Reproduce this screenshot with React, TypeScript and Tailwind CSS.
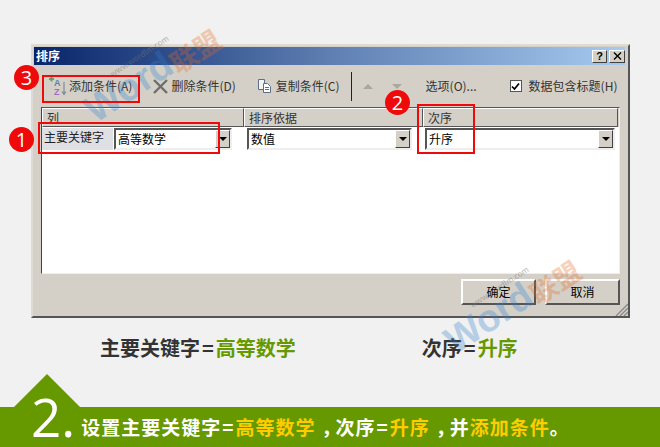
import React from "react";

const cjk = { fontFamily: '"Noto Sans CJK SC", "Liberation Sans", sans-serif' };

function Arrow() {
  return (
    <div className="flex h-[18px] w-[15px] shrink-0 items-center justify-center border border-t-white border-l-white border-r-[#404040] border-b-[#404040] bg-[#d4d0c8]">
      <div className="h-0 w-0 border-x-[4px] border-t-[4px] border-x-transparent border-t-black" />
    </div>
  );
}

function Combo({ text, className }: { text: string; className: string }) {
  return (
    <div className={"flex h-[22px] items-center justify-between border-2 border-t-[#555] border-l-[#555] border-r-[#eee] border-b-[#eee] bg-white pl-[2px] " + className}>
      <span className="text-[12px] leading-none text-black">{text}</span>
      <Arrow />
    </div>
  );
}

function Head({ text, className }: { text: string; className: string }) {
  return (
    <div className={"flex h-[19px] items-center border border-t-white border-l-white border-r-[#555] border-b-[#555] bg-[#d4d0c8] pl-[4px] text-[12px] text-[#333] " + className}>
      {text}
    </div>
  );
}

function Badge({ n, className }: { n: string; className: string }) {
  return (
    <div
      className={"absolute flex h-[25px] w-[25px] items-center justify-center rounded-full bg-[#ee0a0a] text-[20px] leading-none text-white " + className}
      style={{ fontFamily: '"Open Sans", sans-serif' }}
    >
      {n}
    </div>
  );
}

function Watermark({ className }: { className: string }) {
  return (
    <div className={"pointer-events-none absolute flex rotate-[-33deg] items-end " + className}>
      <span className="text-[38px] font-bold leading-none text-[#2f7fd0] opacity-30" style={{ fontFamily: '"Liberation Sans", sans-serif' }}>
        Word
      </span>
      <span className="text-[27px] font-bold leading-none text-[#e86a20] opacity-30">联盟</span>
      <span className="absolute left-[40px] top-[-5px] text-[8px] leading-none text-[#777] opacity-50">www.wordlm.com</span>
    </div>
  );
}

function AddIcon() {
  return (
    <svg width="20" height="22" viewBox="0 0 20 22" className="shrink-0">
      <path d="M1 4h5M3.5 1.5v5" stroke="#5aa56a" strokeWidth="2" />
      <text x="6" y="11" fontSize="9" fontWeight="700" fill="#5b7fb5" fontFamily="Liberation Sans">A</text>
      <text x="6" y="20" fontSize="9" fontWeight="700" fill="#a06fc0" fontFamily="Liberation Sans">Z</text>
      <path d="M16 7v12M14 16.5l2 3 2-3" stroke="#7f8b9a" strokeWidth="1.2" fill="none" />
    </svg>
  );
}

function DeleteIcon() {
  return (
    <svg width="17" height="15" viewBox="0 0 17 15" className="shrink-0">
      <path d="M2 1l13 13M15 1L2 14" stroke="#6e6e6e" strokeWidth="2.4" />
    </svg>
  );
}

function CopyIcon() {
  return (
    <svg width="16" height="16" viewBox="0 0 16 16" className="shrink-0">
      <path d="M1.5 1.5h6v10h-6z" fill="#f4f4f4" stroke="#5e6f85" />
      <path d="M6.5 5.5h4l3 3v6h-7z" fill="#fff" stroke="#5e6f85" />
      <path d="M8 9.5h4M8 11.5h4" stroke="#5e6f85" />
    </svg>
  );
}

export default function App() {
  return (
    <div className="relative flex h-[447px] w-[660px] flex-col overflow-hidden bg-[#f1f1f1]" style={cjk}>
      {/* dialog */}
      <div className="relative ml-[31px] mt-[44px] flex h-[274px] w-[599px] shrink-0 flex-col border-2 border-t-[#dedbd5] border-l-[#dedbd5] border-r-[#555] border-b-[#555] bg-[#d4d0c8] pb-[1px] pl-[1px] pr-[3px] pt-[1px]">
        <div className="flex h-[18px] shrink-0 items-center justify-between bg-gradient-to-r from-[#0a246a] via-[#5f7fb2] to-[#a6caf0] pl-[2px]">
          <span className="text-[12px] font-bold text-white">排序</span>
          <div className="flex gap-[2px]">
            <div className="flex h-[13px] w-[15px] items-center justify-center border border-t-white border-l-white border-r-[#404040] border-b-[#404040] bg-[#d4d0c8] text-[11px] font-bold leading-none text-black" style={{ fontFamily: '"Liberation Sans", sans-serif' }}>?</div>
            <div className="flex h-[13px] w-[16px] items-center justify-center border border-t-white border-l-white border-r-[#404040] border-b-[#404040] bg-[#d4d0c8]">
              <svg width="9" height="8" viewBox="0 0 9 8"><path d="M1 0.5l7 7M8 0.5l-7 7" stroke="#000" strokeWidth="1.4" /></svg>
            </div>
          </div>
        </div>

        <div className="flex h-[42px] shrink-0 items-center text-[12px] text-[#333]">
          <div className="ml-[14px] flex items-center gap-[1px]">
            <AddIcon />
            <span>添加条件(A)</span>
          </div>
          <div className="ml-[20px] flex items-center gap-[2px]">
            <DeleteIcon />
            <span>删除条件(D)</span>
          </div>
          <div className="ml-[21px] flex items-center gap-[3px]">
            <CopyIcon />
            <span>复制条件(C)</span>
          </div>
          <div className="ml-[11px] h-[29px] w-px bg-[#222]" />
          <div className="ml-[11px] h-0 w-0 border-x-[5px] border-b-[5px] border-x-transparent border-b-[#aaa79f]" />
          <div className="ml-[19px] h-0 w-0 border-x-[5px] border-t-[5px] border-x-transparent border-t-[#aaa79f]" />
          <span className="ml-[24px]">选项(O)...</span>
          <div className="ml-[33px] flex h-[12px] w-[12px] items-center justify-center border border-[#555] bg-white">
            <svg width="9" height="9" viewBox="0 0 9 9"><path d="M1 4.5l2.5 2.5L8 1.5" stroke="#000" strokeWidth="1.7" fill="none" /></svg>
          </div>
          <span className="ml-[7px]">数据包含标题(H)</span>
        </div>

        <div className="ml-[7px] h-[167px] w-[579px] shrink-0 border border-[#eee] border-t-[#555] border-l-[#444] bg-white">
          <div className="flex bg-[#d4d0c8]">
            <Head text="列" className="w-[202px]" />
            <Head text="排序依据" className="w-[179px]" />
            <Head text="次序" className="w-[195px]" />
          </div>
          <div className="flex items-center pt-[1px]">
            <div className="flex h-[22px] w-[71px] shrink-0 items-start bg-[#e0dfe3] pl-[2px] pt-[3px] text-[12px] leading-none text-[#222]">主要关键字</div>
            <Combo text="高等数学" className="ml-[1px] w-[118px]" />
            <Combo text="数值" className="ml-[15px] w-[165px]" />
            <Combo text="升序" className="ml-[13px] w-[190px]" />
          </div>
        </div>

        <div className="flex shrink-0 justify-end gap-[9px] pr-[5px] pt-[5px]">
          {["确定", "取消"].map((t) => (
            <div key={t} className="flex h-[26px] w-[75px] items-center justify-center border-2 border-t-white border-l-white border-r-[#555] border-b-[#555] bg-[#d4d0c8] text-[12px] text-black">
              {t}
            </div>
          ))}
        </div>
        <svg width="13" height="13" viewBox="0 0 13 13" className="absolute bottom-0 right-0">
          <path d="M1 13L13 1M5 13l8-8M9 13l4-4" stroke="#888" strokeWidth="1.3" />
        </svg>
      </div>

      {/* captions */}
      <div className="mt-[18px] flex h-[24px] shrink-0 items-center text-[20px] font-bold leading-none text-[#333]">
        <span className="ml-[100px]">主要关键字<span className="px-[2px]">=</span><span className="text-[#669900]">高等数学</span></span>
        <span className="ml-[126px]">次序<span className="px-[2px]">=</span><span className="text-[#669900]">升序</span></span>
      </div>

      {/* footer */}
      <div className="relative mt-auto flex h-[40px] shrink-0 items-center bg-[#669900] pb-[1px] pl-[31px] text-white">
        <div className="absolute left-[14px] top-[-33px] h-[33px] w-[66px] bg-[#669900] [clip-path:polygon(50%_0,100%_100%,0_100%)]" />
        <span className="relative mt-[-20px] shrink-0 text-[53px] font-normal leading-none" style={{ fontFamily: '"Open Sans", sans-serif' }}>2.</span>
        <span className="ml-[6px] whitespace-nowrap text-[19px] font-bold leading-none tracking-[1px]">
          设置主要关键字<span className="px-[1px]">=</span><span className="text-[#ffcc00]">高等数学</span><span className="ml-[6px] mr-[-6px]">，</span>次序<span className="px-[1px]">=</span><span className="text-[#ffcc00]">升序</span><span className="ml-[6px] mr-[-6px]">，</span>并<span className="text-[#ffcc00]">添加条件</span>。
        </span>
      </div>

      {/* annotations */}
      <Watermark className="left-[76px] top-[53px]" />
      <Watermark className="left-[436px] top-[284px]" />
      <div className="absolute left-[42px] top-[75px] h-[28px] w-[98px] border-2 border-[#ee0a0a]" />
      <div className="absolute left-[38px] top-[122px] h-[32px] w-[182px] border-2 border-[#ee0a0a]" />
      <div className="absolute left-[417px] top-[104px] h-[50px] w-[58px] border-2 border-[#ee0a0a]" />
      <Badge n="3" className="left-[14px] top-[65px]" />
      <Badge n="1" className="left-[9px] top-[127px]" />
      <Badge n="2" className="left-[385px] top-[90px]" />
    </div>
  );
}
